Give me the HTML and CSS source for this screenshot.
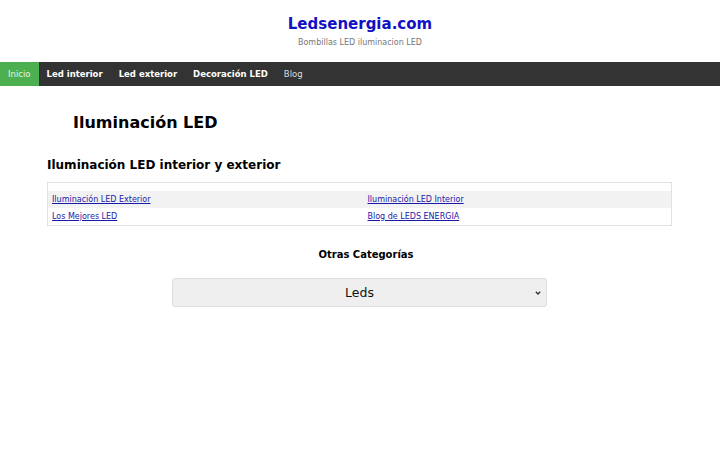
FILE: index.html
```html
<!DOCTYPE html>
<html lang="es">
  <head>
    <meta charset="UTF-8">
    <title>Ledsenergia.com</title>
    <link rel="stylesheet" href="styles.css">
  </head>
  <body>

    <header class="site-header">
      <a class="site-title" href="#">Ledsenergia.com</a>
      <p class="site-tagline">Bombillas LED iluminacion LED</p>
    </header>

    <nav class="topnav">
      <a class="active" href="#">Inicio</a>
      <a class="strong" href="#">Led interior</a>
      <a class="strong" href="#">Led exterior</a>
      <a class="strong" href="#">Decoración LED</a>
      <a href="#">Blog</a>
    </nav>

    <main class="content">
      <h1 class="page-title">Iluminación LED</h1>
      <h2 class="section-title">Iluminación LED interior y exterior</h2>

      <table class="links">
        <colgroup>
          <col class="col-left">
          <col>
        </colgroup>
        <thead>
          <tr><th></th><th></th></tr>
        </thead>
        <tbody>
          <tr>
            <td><a href="#">Iluminación LED Exterior</a></td>
            <td><a href="#">Iluminación LED Interior</a></td>
          </tr>
          <tr>
            <td><a href="#">Los Mejores LED</a></td>
            <td><a href="#">Blog de LEDS ENERGIA</a></td>
          </tr>
        </tbody>
      </table>

      <div class="categories">
        <h3>Otras Categorías</h3>
        <div class="select-wrap">
          <select class="cat-select">
            <option>Leds</option>
            <option>Bombillas</option>
            <option>Tiras LED</option>
          </select>
          <svg class="select-arrow" width="6" height="4" viewBox="0 0 6 4">
            <path d="M0.8 0.8 L3 3 L5.2 0.8" fill="none" stroke="#333" stroke-width="1.3"/>
          </svg>
        </div>
      </div>
    </main>

  </body>
</html>
```

FILE: styles.css
```css
*, html, body {
  margin: 0;
  padding: 0;
  box-sizing: border-box;
}

body {
  font-family: "DejaVu Sans", sans-serif;
  color: #000;
  background: #fff;
}

/* header */
.site-header {
  text-align: center;
  padding: 15px 0 14px;
}

.site-title {
  display: block;
  font-size: 15px;
  line-height: 18px;
  font-weight: bold;
  color: #1111c4;
  text-decoration: none;
}

.site-tagline {
  margin-top: 5px;
  font-size: 8px;
  line-height: 10px;
  color: #777;
}

/* nav */
.topnav {
  display: flex;
  background: #333;
  height: 24px;
}

.topnav a {
  display: block;
  padding: 0 8px;
  line-height: 24px;
  font-size: 8.5px;
  color: #ddd;
  text-decoration: none;
}

.topnav a.strong {
  color: #fff;
  font-weight: bold;
}

.topnav a.active {
  background: #4caf50;
  color: #e8f5e9;
}

/* content */
.content {
  padding: 27px 48px 0 47px;
}

.page-title {
  padding-left: 26px;
  font-size: 16px;
  line-height: 20px;
}

.section-title {
  margin-top: 24px;
  font-size: 12px;
  line-height: 16px;
}

.links {
  margin-top: 9px;
  width: 100%;
  border: 1px solid #e2e2e2;
  border-collapse: collapse;
  table-layout: fixed;
  font-size: 8px;
}

.links .col-left { width: 316px; }

.links th {
  height: 8px;
  padding: 0;
}

.links td {
  padding: 0 4px;
  height: 17px;
  line-height: 17px;
}

.links tbody tr:first-child { background: #f2f2f2; }
.links tbody tr:last-child td { height: 18px; }

.links a { color: #1a1aa8; }

.categories {
  margin-top: 23px;
  text-align: center;
}

.categories h3 {
  padding-left: 13px;
  font-size: 10px;
  line-height: 12px;
}

.select-wrap {
  position: relative;
  width: 375px;
  margin: 17px auto 0;
}

.cat-select {
  display: block;
  width: 100%;
  height: 29px;
  appearance: none;
  font-family: "DejaVu Sans", sans-serif;
  font-size: 12.5px;
  text-align: center;
  text-align-last: center;
  color: #111;
  background: #efefef;
  border: 1px solid #ddd;
  border-radius: 3px;
}

.select-arrow {
  position: absolute;
  right: 6px;
  top: 13px;
  pointer-events: none;
}
```
